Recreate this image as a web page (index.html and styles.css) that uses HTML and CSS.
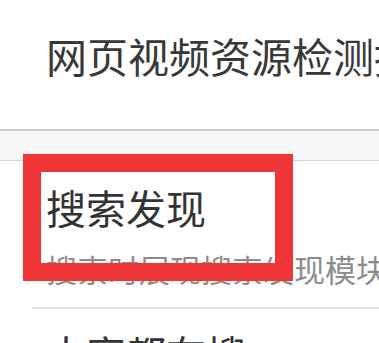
FILE: index.html
```html
<!DOCTYPE html>
<html lang="zh-CN">
<head>
<meta charset="utf-8">
<title>网页视频资源检测</title>
<link rel="stylesheet" href="styles.css">
</head>
<body>
<div class="screen">
  <header class="header">
    <h1 class="title">网页视频资源检测提示</h1>
  </header>
  <div class="band"></div>
  <section class="pref">
    <h2 class="pref-title">搜索发现</h2>
    <p class="pref-summary">搜索时展现搜索发现模块</p>
  </section>
  <div class="divider"></div>
  <section class="pref pref-next">
    <h2 class="pref-title">大家都在搜</h2>
  </section>
  <div class="highlight"></div>
</div>
</body>
</html>
```
FILE: styles.css
```css
html, body {
  margin: 0;
  padding: 0;
  background: #ffffff;
}
.screen {
  position: relative;
  width: 379px;
  height: 343px;
  overflow: hidden;
  font-family: "Noto Sans CJK SC", "Noto Sans", sans-serif;
}
.header {
  height: 129px;
  box-sizing: border-box;
  padding: 35px 0 0 46px;
}
.title {
  margin: 0;
  font-size: 41px;
  line-height: 40px;
  font-weight: 400;
  color: #383838;
  white-space: nowrap;
}
.band {
  height: 29px;
  background: #f7f7f7;
  border-top: 2px solid #cbcbcb;
  border-bottom: 1px solid #d6d6d6;
}
.pref {
  padding: 26px 0 0 46px;
}
.pref-next {
  padding-top: 24px;
}
.pref-title {
  margin: 0;
  font-size: 40px;
  line-height: 40px;
  font-weight: 400;
  color: #333333;
  white-space: nowrap;
}
.pref-summary {
  margin: 26px 0 0;
  font-size: 31px;
  line-height: 31px;
  color: #8c8c8c;
  white-space: nowrap;
}
.divider {
  margin: 23px 0 0 32px;
  height: 2px;
  background: #e2e2e2;
}
.highlight {
  position: absolute;
  left: 23px;
  top: 154px;
  width: 270px;
  height: 127px;
  box-sizing: border-box;
  border: 18px solid #ee3537;
}
```
